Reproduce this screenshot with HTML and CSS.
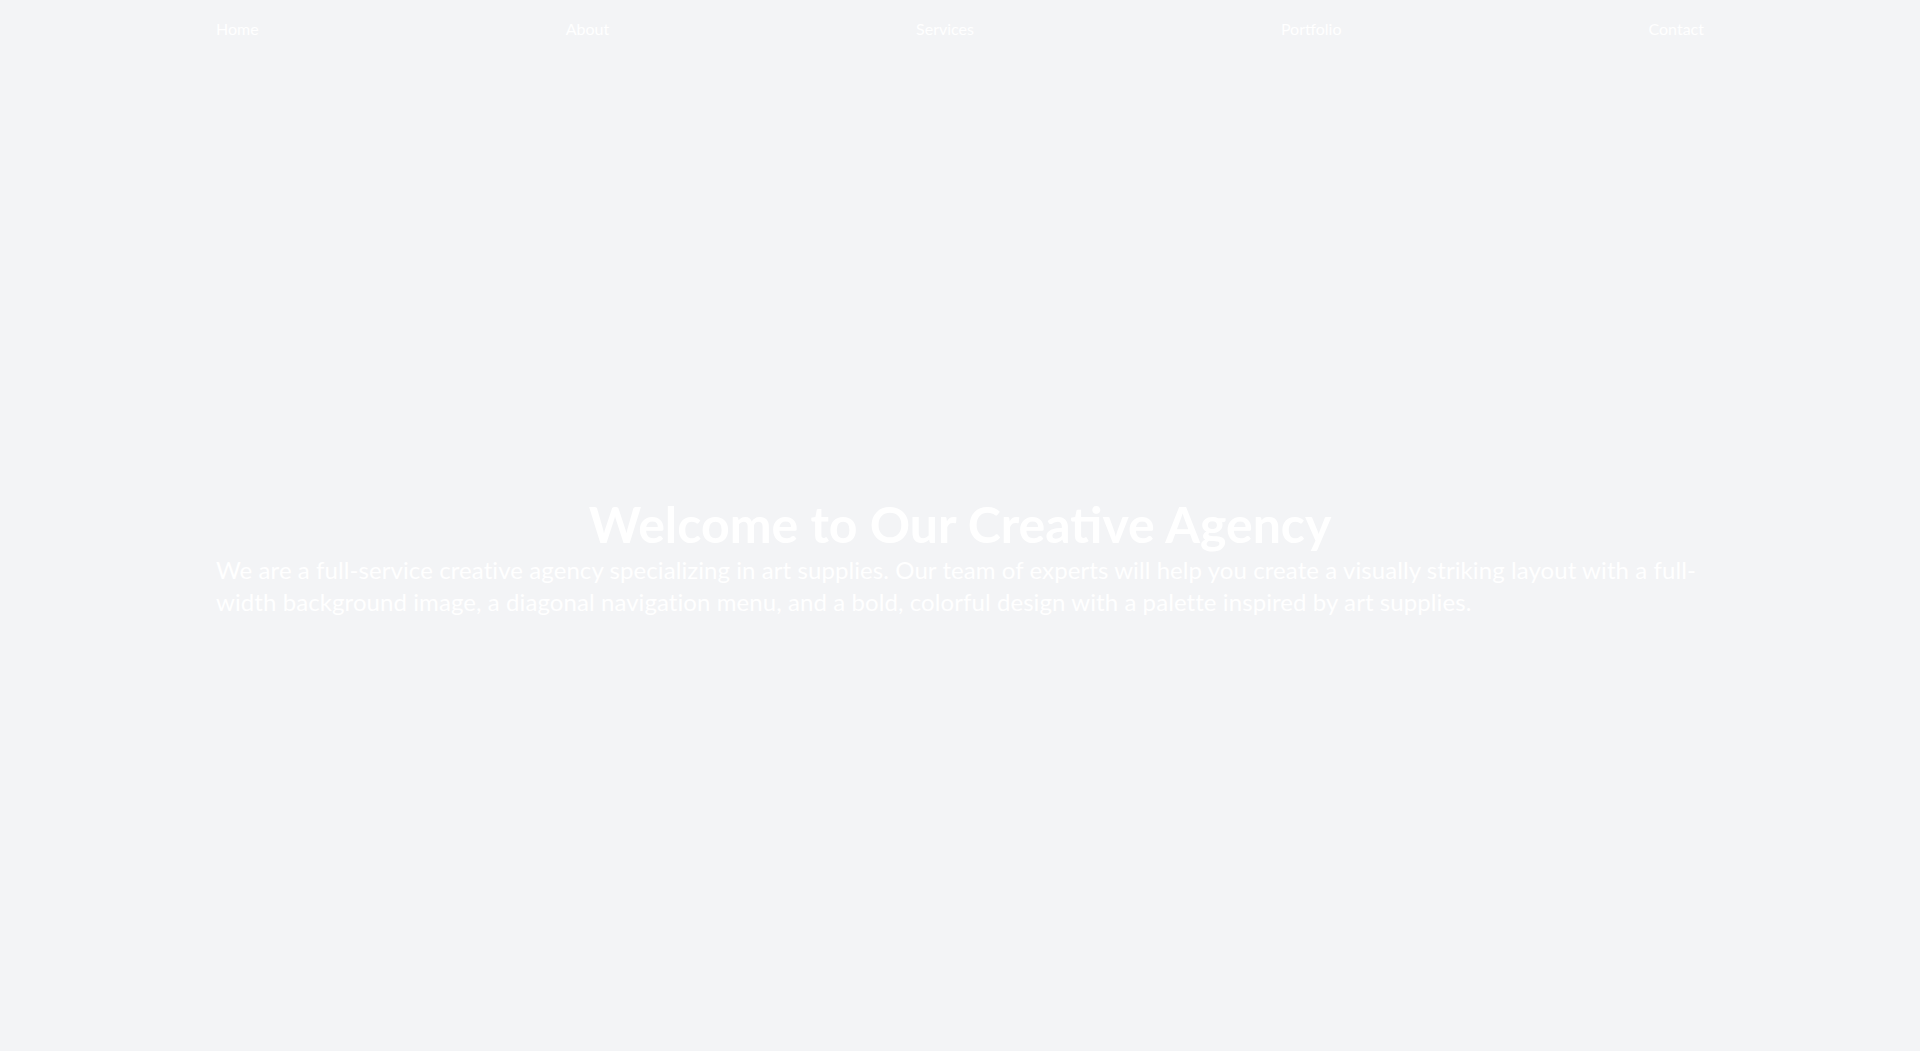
FILE: index.html
```html
<!DOCTYPE html>
<html lang="en">
<head>
<meta charset="utf-8">
<title>Creative Agency</title>
<link rel="stylesheet" href="styles.css">
</head>
<body>
<header class="site-header">
  <nav class="container nav">
    <a class="nav-link" href="#">Home</a>
    <a class="nav-link" href="#">About</a>
    <a class="nav-link" href="#">Services</a>
    <a class="nav-link" href="#">Portfolio</a>
    <a class="nav-link" href="#">Contact</a>
  </nav>
</header>
<main class="hero">
  <div class="container hero-content">
    <h1 class="hero-title">Welcome to Our Creative Agency</h1>
    <p class="hero-text">We are a full-service creative agency specializing in art supplies. Our team of experts will help you create a visually striking layout with a full-width background image, a diagonal navigation menu, and a bold, colorful design with a palette inspired by art supplies.</p>
  </div>
</main>
</body>
</html>
```
FILE: styles.css
```css
html, body {
  margin: 0;
  padding: 0;
}
body {
  background: #f3f4f6;
  color: #ffffff;
  font-family: "Lato", "Segoe UI", sans-serif;
  overflow: hidden;
}
.container {
  max-width: 1536px;
  margin: 0 auto;
  padding: 0 24px;
  box-sizing: border-box;
}
.site-header {
  padding: 16px 0;
}
.nav {
  display: flex;
  justify-content: space-between;
  align-items: center;
}
.nav-link {
  color: #ffffff;
  text-decoration: none;
  font-size: 16px;
  line-height: 26px;
}
.hero {
  height: calc(100vh - 58px);
  padding-top: 7px;
  box-sizing: border-box;
  display: flex;
  align-items: center;
}
.hero-content {
  width: 100%;
}
.hero-title {
  margin: 0 0 5px;
  font-size: 50px;
  line-height: 50px;
  font-weight: 700;
  text-align: center;
}
.hero-text {
  margin: 0;
  font-size: 24px;
  line-height: 32px;
  font-weight: 400;
  letter-spacing: 0.08px;
}
```
